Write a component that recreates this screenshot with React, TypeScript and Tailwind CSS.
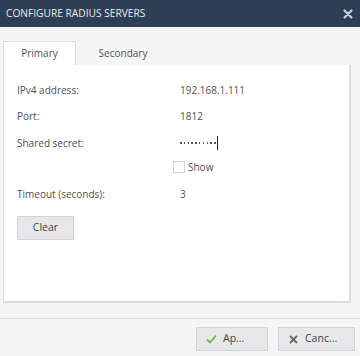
import React from "react";

export default function App() {
  const font = { fontFamily: '"Open Sans", "Noto Sans", sans-serif' };
  const dots = Array.from({ length: 10 });
  return (
    <div className="w-[360px] h-[356px] bg-[#f5f5f5] flex flex-col text-[10px] text-[#505050]" style={font}>
      <div className="h-[27px] bg-[#2e3e55] flex items-center justify-between pl-[6px] pr-[6px] shrink-0">
        <span className="text-[10.2px] text-[#e8edf3]">CONFIGURE RADIUS SERVERS</span>
        <svg width="10" height="10" viewBox="0 0 10 10" className="mr-[1px]">
          <path d="M1.5 1.5 L8.5 8.5 M8.5 1.5 L1.5 8.5" stroke="#c9cfd8" strokeWidth="2.2" strokeLinecap="round" />
        </svg>
      </div>
      <div className="flex-1 flex flex-col pl-[3px] pr-[9px] pt-[14px]">
        <div className="flex h-[24px] items-stretch">
          <div className="w-[73px] bg-white border border-b-0 border-[#dcdce2] flex items-center justify-center">Primary</div>
          <div className="w-[94px] flex items-center justify-center">Secondary</div>
        </div>
        <div className="h-[238px] bg-white border border-t-0 border-[#dcdce2] border-r-2 border-b-2 pl-[13px] pt-[12px]">
          <div className="flex h-[26px] items-center"><span className="w-[163px]">IPv4 address:</span><span>192.168.1.111</span></div>
          <div className="flex h-[26px] items-center"><span className="w-[163px]">Port:</span><span>1812</span></div>
          <div className="flex h-[28px] items-center">
            <span className="w-[163px]">Shared secret:</span>
            <span className="flex items-center">
              <span className="flex gap-[2.3px] items-center">
                {dots.map((_, i) => (
                  <span key={i} className="w-[1.5px] h-[1.5px] bg-[#555]"></span>
                ))}
              </span>
              <span className="inline-block w-[1px] h-[14px] bg-[#222] ml-[1px]"></span>
            </span>
          </div>
          <div className="flex h-[20px] items-center pl-[156px]">
            <span className="w-[12px] h-[12px] border border-[#d4d4d8] bg-white"></span>
            <span className="ml-[3px]">Show</span>
          </div>
          <div className="flex h-[34px] items-center"><span className="w-[163px]">Timeout (seconds):</span><span>3</span></div>
          <div className="mt-[5px] w-[57px] h-[24px] bg-[#e8e8ea] border border-[#d2d2d8] flex items-center justify-center text-[10.5px] text-[#444]">Clear</div>
        </div>
        <div className="flex-1"></div>
      </div>
      <div className="h-[38px] border-t border-[#dcdce2] flex items-start justify-end gap-[10px] pr-[5px] pt-[8px] shrink-0">
        <div className="w-[72px] h-[24px] bg-[#e8e8ea] border border-[#d2d2d8] flex items-center pl-[9px] text-[10.5px] text-[#444]">
          <svg width="11" height="10" viewBox="0 0 11 10">
            <path d="M1 5.5 L4 8.5 L10 1.5" stroke="#6cb33f" strokeWidth="1.8" fill="none" />
          </svg>
          <span className="ml-[6px]">Ap...</span>
        </div>
        <div className="w-[77px] h-[24px] bg-[#e8e8ea] border border-[#d2d2d8] flex items-center pl-[10px] text-[10.5px] text-[#444]">
          <svg width="9" height="9" viewBox="0 0 9 9">
            <path d="M1 1 L8 8 M8 1 L1 8" stroke="#666" strokeWidth="1.8" />
          </svg>
          <span className="ml-[7px]">Canc...</span>
        </div>
      </div>
    </div>
  );
}
